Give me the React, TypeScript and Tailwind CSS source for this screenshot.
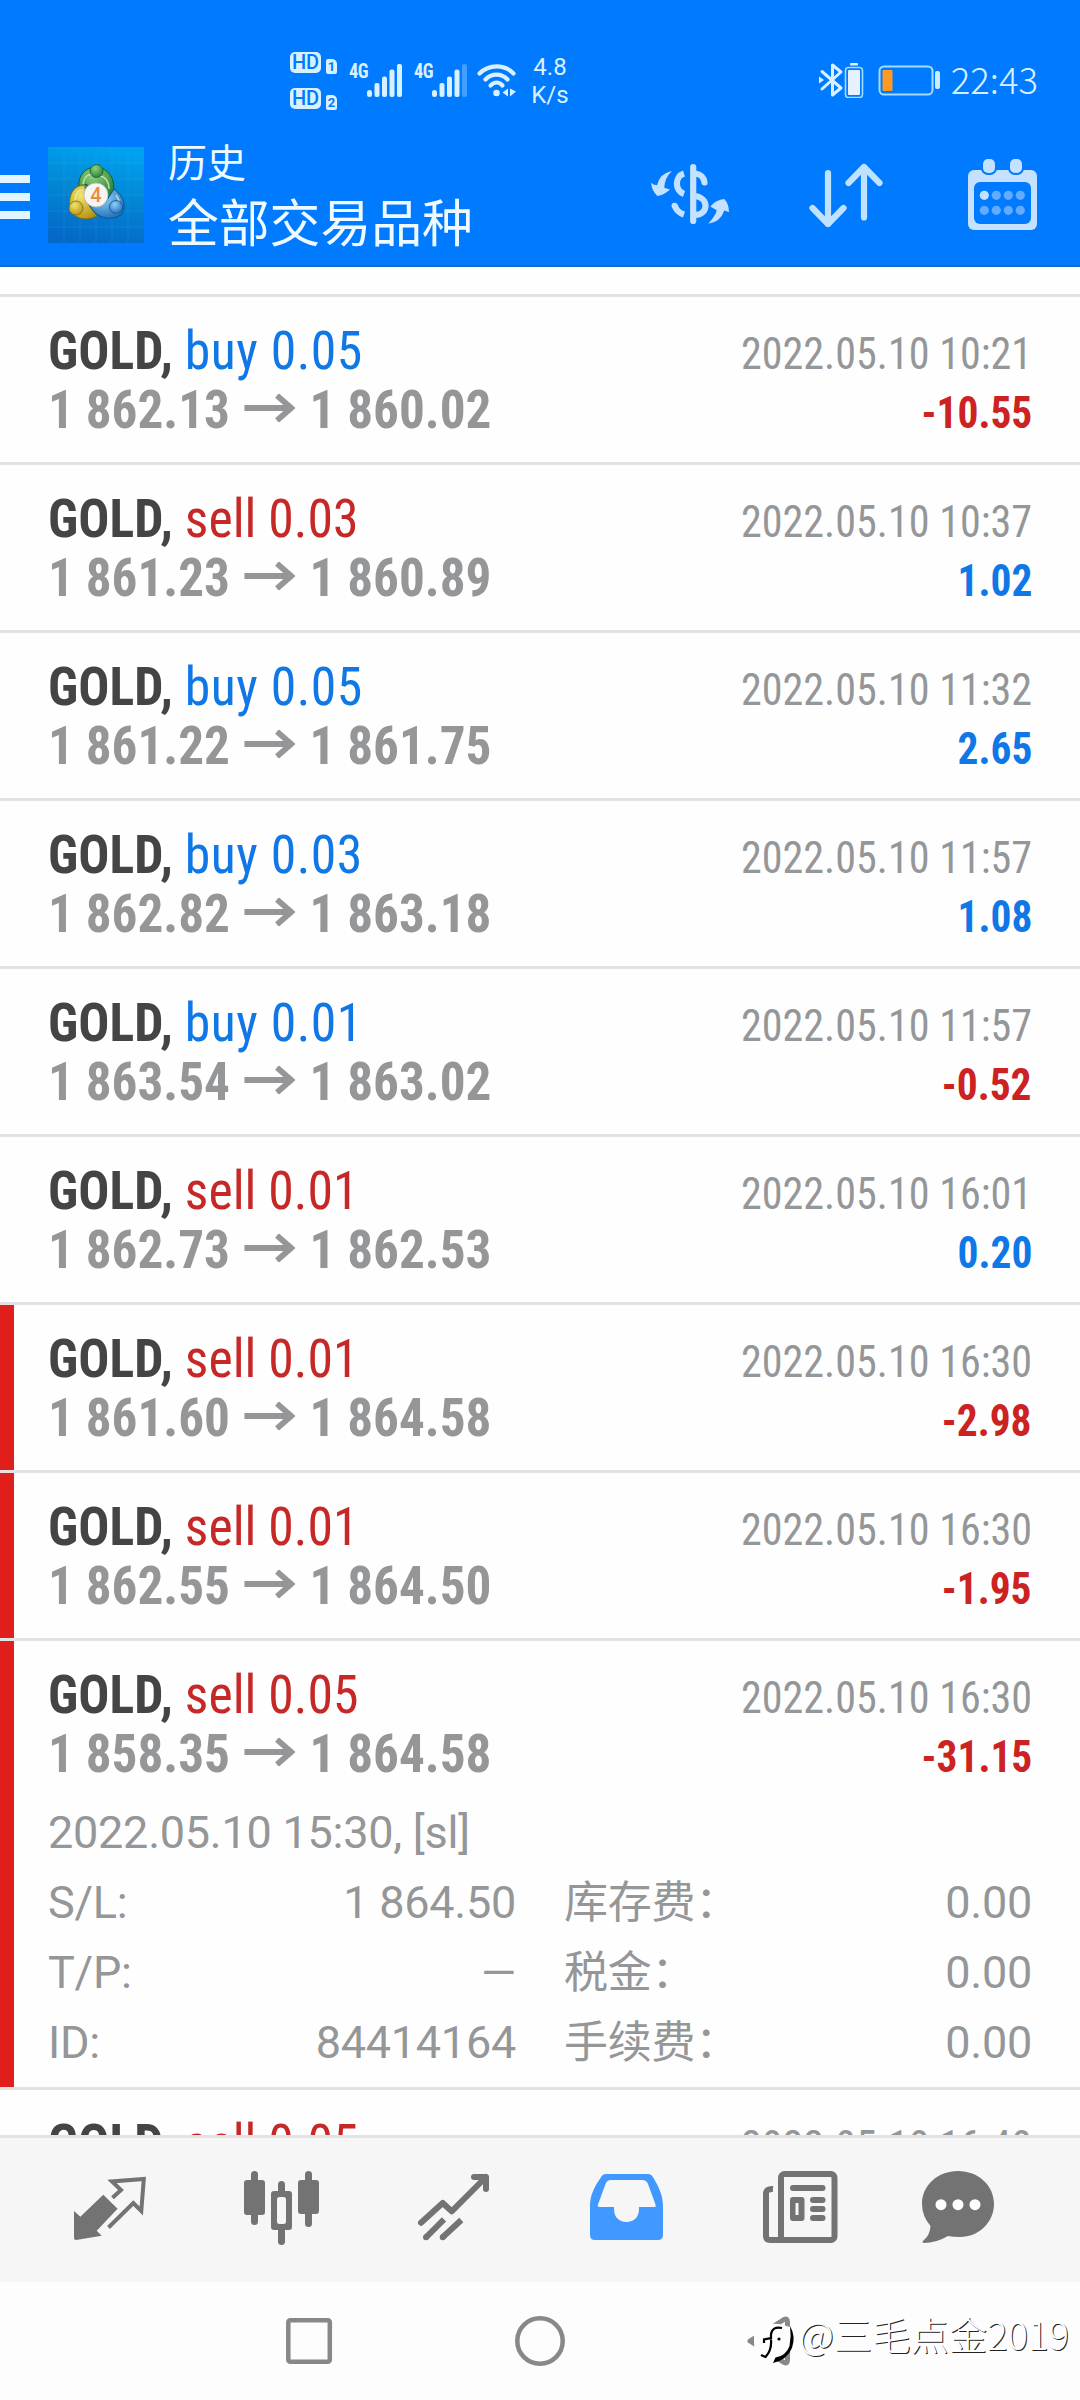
import { useState } from "react"
import clsx from "clsx"

const deals = [
  { id: 1, side: "buy", lots: "0.05", open: "1 862.13", close: "1 860.02", time: "2022.05.10 10:21", profit: "-10.55" },
  { id: 2, side: "sell", lots: "0.03", open: "1 861.23", close: "1 860.89", time: "2022.05.10 10:37", profit: "1.02" },
  { id: 3, side: "buy", lots: "0.05", open: "1 861.22", close: "1 861.75", time: "2022.05.10 11:32", profit: "2.65" },
  { id: 4, side: "buy", lots: "0.03", open: "1 862.82", close: "1 863.18", time: "2022.05.10 11:57", profit: "1.08" },
  { id: 5, side: "buy", lots: "0.01", open: "1 863.54", close: "1 863.02", time: "2022.05.10 11:57", profit: "-0.52" },
  { id: 6, side: "sell", lots: "0.01", open: "1 862.73", close: "1 862.53", time: "2022.05.10 16:01", profit: "0.20" },
  { id: 7, side: "sell", lots: "0.01", open: "1 861.60", close: "1 864.58", time: "2022.05.10 16:30", profit: "-2.98", stopped: true },
  { id: 8, side: "sell", lots: "0.01", open: "1 862.55", close: "1 864.50", time: "2022.05.10 16:30", profit: "-1.95", stopped: true },
  {
    id: 9,
    side: "sell",
    lots: "0.05",
    open: "1 858.35",
    close: "1 864.58",
    time: "2022.05.10 16:30",
    profit: "-31.15",
    stopped: true,
    details: {
      opened: "2022.05.10 15:30, [sl]",
      rows: [
        ["S/L:", "1 864.50", "库存费：", "0.00"],
        ["T/P:", "—", "税金：", "0.00"],
        ["ID:", "84414164", "手续费：", "0.00"],
      ],
    },
  },
  { id: 10, side: "sell", lots: "0.05", open: "1 858.35", close: "1 864.58", time: "2022.05.10 16:40", profit: "-31.15" },
]

function SimBadge({ slot }) {
  return (
    <div className="flex items-end gap-[5px]">
      <div className="flex h-[21px] w-[31px] items-center justify-center rounded-[5px] bg-[#d9f1ff] text-[20px] leading-none font-medium text-[#007aff]">
        HD
      </div>
      <div className="-mb-px flex h-[15px] w-[11px] items-center justify-center rounded-[2px] rounded-tr-[5px] bg-[#d9f1ff] text-[13px] leading-none font-bold text-[#007aff]">
        {slot}
      </div>
    </div>
  )
}

function Signal({ weak = false }) {
  return (
    <div className="flex h-[34px] w-[65px] items-start">
      <span className="w-[18px] origin-left scale-x-[0.92] font-[Roboto] text-[20px] leading-[17px] font-bold tracking-[-0.5px] text-[#d9f1ff] font-stretch-condensed">
        4G
      </span>
      <svg width="35" height="34" viewBox="0 0 35 34" fill="#d9f1ff">
        <rect x="0" y="27" width="5" height="7" rx="2.5" />
        <rect x="7.5" y="20" width="5" height="14" rx="2" />
        <rect x="15" y="13.5" width="5" height="20.5" rx="2" />
        <rect x="22.5" y="6.5" width="5" height="27.5" rx="2" />
        <rect x="30" y="1" width="5" height="33" rx="2" opacity={weak ? 0.3 : 1} />
      </svg>
    </div>
  )
}

function StatusBar() {
  return (
    <div className="flex h-32 items-center pt-8 pl-[290px] pr-[42px]">
      <div className="flex w-[59px] flex-col gap-[15px]">
        <SimBadge slot="1" />
        <SimBadge slot="2" />
      </div>
      <Signal />
      <Signal weak />
      <svg width="40" height="34" viewBox="0 0 40 34" className="-ml-0.5">
        <g fill="none" stroke="#d9f1ff" strokeWidth="4.2" strokeLinecap="round">
          <path d="M2.5 10.5C12 1 27.500 1 36.500 10.500" />
          <path d="M8.500 16.500C14.500 10 24.500 10 30.500 16.500" />
          <path d="M13.500 22.500C17.500 18.500 22 18.500 25.500 22.500" />
        </g>
        <circle cx="19.500" cy="30" r="3.300" fill="#d9f1ff" />
        <path d="M31 25.500V33.500L25.500 29.500ZM33 25.500V33.500L39 28.500Z" fill="#d9f1ff" />
      </svg>
      <div className="mt-0.5 ml-[13px] w-10 text-center font-[Roboto] text-[24px] leading-[28px] text-[#d9f1ff]">
        <div>4.8</div>
        <div>K/s</div>
      </div>
      <div className="ml-auto flex items-center">
        <svg width="122" height="36" viewBox="0 0 122 36">
          <path d="M3 9.500L22 26L13.500 33V3L22 10L3 27" fill="none" stroke="#d9f1ff" strokeWidth="3" strokeLinejoin="round" strokeLinecap="round" />
          <path d="M0 14.500L5 18L0 21.500Z" fill="#d9f1ff" />
          <rect x="31" y="1" width="8" height="2.500" rx="1" fill="#d9f1ff" />
          <rect x="26.500" y="5.500" width="17" height="30" rx="3" fill="none" stroke="#a5dcff" strokeWidth="1.600" />
          <rect x="29" y="8" width="12" height="25" rx="1" fill="#e6f0ff" />
          <rect x="60.500" y="4.500" width="53" height="28" rx="4.500" fill="none" stroke="#a5dcff" strokeWidth="2" />
          <rect x="63.500" y="8" width="10" height="21" rx="1" fill="#ff9a23" />
          <rect x="116" y="9" width="5" height="18" rx="2" fill="#c9ecff" />
        </svg>
        <span className="-mt-0.5 ml-[10px] font-['Noto_Sans_CJK_SC',sans-serif] text-[36.5px] leading-10 font-light text-[#d9f1ff]">22:43</span>
      </div>
    </div>
  )
}

function AppLogo() {
  return (
    <svg width="96" height="96" viewBox="0 0 96 96">
      <defs>
        <linearGradient id="logoBg" x1="0.6" y1="0" x2="0.4" y2="1">
          <stop offset="0" stopColor="#00a2f0" />
          <stop offset="0.5" stopColor="#0285d2" />
          <stop offset="1" stopColor="#0468c8" />
        </linearGradient>
        <radialGradient id="green" cx="0.4" cy="0.3" r="0.8">
          <stop offset="0" stopColor="#8fd07c" />
          <stop offset="1" stopColor="#1f7a34" />
        </radialGradient>
        <radialGradient id="yellow" cx="0.4" cy="0.3" r="0.8">
          <stop offset="0" stopColor="#f4e36a" />
          <stop offset="1" stopColor="#b08f10" />
        </radialGradient>
        <radialGradient id="blue" cx="0.4" cy="0.3" r="0.8">
          <stop offset="0" stopColor="#8ed0f8" />
          <stop offset="1" stopColor="#1769b5" />
        </radialGradient>
      </defs>
      <rect width="96" height="96" fill="url(#logoBg)" />
      <path
        d="M0 16H96M0 32H96M0 48H96M0 64H96M0 80H96M16 0V96M32 0V96M48 0V96M64 0V96M80 0V96"
        stroke="#5cc0f5"
        strokeWidth="0.600"
        opacity="0.250"
      />
      <path d="M31 42C29 24 42 20 48 20C56 20 69 28 65 47L55 51L38 37Z" fill="url(#green)" stroke="#175c2b" strokeWidth="1" />
      <path d="M37 38C24 38 20 50 22 62C26 73 40 74 49 69L38 54Z" fill="url(#yellow)" stroke="#7c6a12" strokeWidth="1" />
      <path d="M66 42C76 49 78 59 74 67C66 74 49 73 42 59L57 56Z" fill="url(#blue)" stroke="#134f8f" strokeWidth="1" />
      <path d="M35 37C37 26 44 26 49 30C56 27 61 34 61 42M35 43C27 43 26 53 28 60M68 48C74 55 71 62 68 67" fill="none" stroke="#d6f0bd" strokeWidth="1.500" opacity="0.800" />
      <circle cx="48.500" cy="24" r="6.500" fill="url(#green)" stroke="#175c2b" strokeWidth="0.800" />
      <circle cx="28" cy="61" r="7" fill="url(#yellow)" stroke="#7c6a12" strokeWidth="0.800" />
      <circle cx="68" cy="60" r="6.500" fill="url(#blue)" stroke="#134f8f" strokeWidth="0.800" />
      <circle cx="48" cy="48" r="12" fill="#f5f5f5" stroke="#b9bcae" strokeWidth="0.800" />
      <text x="48" y="55" textAnchor="middle" fontFamily="Roboto" fontSize="20" fontWeight="500" fill="#f08a3a">
        4
      </text>
    </svg>
  )
}

function AppBar() {
  return (
    <div className="flex h-[139px] items-center border-b-2 border-[#1268c4] pr-9">
      <div className="flex w-[30px] flex-col gap-[10px]">
        <span className="h-2 bg-[#e2f4ff]"></span>
        <span className="h-2 bg-[#e2f4ff]"></span>
        <span className="h-2 bg-[#e2f4ff]"></span>
      </div>
      <div className="mx-[18px] mb-1">
        <AppLogo />
      </div>
      <div className="mb-2 ml-1.5 font-['Noto_Sans_CJK_SC',sans-serif] text-[#eefaff]">
        <div className="text-[39px] leading-[56px]">历史</div>
        <div className="text-[50.8px] leading-[65px]">全部交易品种</div>
      </div>
      <div className="mb-1 ml-auto flex gap-[72px]">
        <svg width="84" height="84" viewBox="0 0 84 84" fill="#c4e2ff">
          <path
            d="M45.200 14V68M47 20.500C53 21 56 25 56.500 29.500M47 43C61 45 61 61 47 62"
            fill="none"
            stroke="#c4e2ff"
            strokeWidth="6.200"
            strokeLinecap="round"
          />
          <path d="M36 20.500C26.500 23.500 26.500 37.500 36 41M36 61.500C31.500 60 28 57 26.800 52.500" fill="none" stroke="#c4e2ff" strokeWidth="6.200" />
          <circle cx="26.600" cy="52.800" r="3.100" />
          <path d="M24 18Q16.500 25 16.300 34.700L22 36.500Q16 42 9.300 43Q4 38 3 29.700Q5 32 9 32.300Q12 20 24 18Z" />
          <path d="M60.300 70.700Q68 62 68.700 57.300L62.300 53.500Q68 46.500 76.300 46Q81 51 81 59.300Q79 58 76.300 57.500Q72.500 69 60.300 70.700Z" />
        </svg>
        <svg width="84" height="84" viewBox="0 0 84 84" fill="none" stroke="#bfe3ff" strokeWidth="6.200" strokeLinecap="round" strokeLinejoin="round">
          <path d="M24 20V71M8.500 55L24 71L39.500 55" />
          <path d="M60 64.500V14M44.500 30L60 14L75.500 30" />
        </svg>
        <svg width="84" height="84" viewBox="0 0 84 84">
          <rect x="8" y="17" width="69" height="60" rx="6" fill="#c4e2ff" />
          <rect x="14" y="29" width="57" height="42" rx="6" fill="#007aff" />
          <rect x="21" y="4" width="16" height="18" rx="7" fill="#007aff" />
          <rect x="48" y="4" width="16" height="18" rx="7" fill="#007aff" />
          <rect x="23" y="6" width="12" height="14" rx="5" fill="#c4e2ff" />
          <rect x="50" y="6" width="12" height="14" rx="5" fill="#c4e2ff" />
          <g fill="#62acff">
            <circle cx="24.300" cy="42.300" r="4.600" fill="#c4e2ff" />
            <circle cx="36.300" cy="42.300" r="4.600" />
            <circle cx="48.300" cy="42.300" r="4.600" />
            <circle cx="60.300" cy="42.300" r="4.600" />
            <circle cx="24.300" cy="57.300" r="4.600" />
            <circle cx="36.300" cy="57.300" r="4.600" />
            <circle cx="48.300" cy="57.300" r="4.600" />
            <circle cx="60.300" cy="57.300" r="4.600" />
          </g>
        </svg>
      </div>
    </div>
  )
}

function DealRow({ deal }) {
  const loss = deal.profit.startsWith("-")

  return (
    <div className="flex border-t-[3px] border-[#e3e3e3]">
      <div className={clsx("w-[14px] shrink-0", deal.stopped && "bg-[#e01e1c]")}></div>
      <div className="flex-1 pt-6 pr-12 pl-[34px]">
        <div className="h-[141px] font-['Roboto_Condensed','Roboto'] text-[54px] leading-[59px] whitespace-nowrap font-stretch-condensed">
          <div className="flex h-[59px] items-baseline justify-between">
            <div className="origin-left scale-x-[0.957]">
              <span className="font-bold text-[#444444]">GOLD, </span>
              <span className={deal.side === "buy" ? "tracking-[0.5px] text-[#0f78e6]" : "text-[#c62828]"}>
                {deal.side} {deal.lots}
              </span>
            </div>
            <div className="origin-right scale-x-[0.936] text-[45px] text-[#949698]">{deal.time}</div>
          </div>
          <div className="flex h-[59px] items-baseline justify-between">
            <div className="flex origin-left scale-x-[0.948] items-baseline font-bold text-[#949698]">
              <span>{deal.open}</span>
              <svg width="54" height="28" viewBox="0 0 54 28" className="mr-[15px] ml-[15px] translate-y-[-6px]" fill="none" stroke="#949698" strokeWidth="6">
                <path d="M0 14H51" />
                <path d="M34.500 1.500L49.500 14L34.500 26.500" />
              </svg>
              <span>{deal.close}</span>
            </div>
            <div className={clsx("origin-right scale-x-[0.92] text-[45px] font-bold", loss ? "text-[#cc2222]" : "text-[#0f78e6]")}>
              {deal.profit}
            </div>
          </div>
        </div>

        {deal.details && (
          <div className="-mt-[8px] pb-[9px] font-['Roboto','Noto_Sans_CJK_SC',sans-serif] text-[45px] leading-[70px] tracking-[-0.25px] text-[#949698]">
            <div>{deal.details.opened}</div>
            {deal.details.rows.map(([label, value, feeLabel, fee]) => (
              <div key={label} className="flex h-[70px]">
                <div className="flex w-[468px] justify-between">
                  <span>{label}</span>
                  <span>{value}</span>
                </div>
                <div className="ml-12 flex flex-1 justify-between">
                  <span className="text-[44px]">{feeLabel}</span>
                  <span>{fee}</span>
                </div>
              </div>
            ))}
          </div>
        )}
      </div>
    </div>
  )
}

const tabs = [
  {
    name: "quotes",
    icon: (
      <>
        <path d="M12 49L18.300 54.700L41.300 32.700L55.600 46.700L34.700 68.700L39.700 73.700L14 78Q12 78 12 76Z" />
        <path d="M50.500 35.700L59 28L50 19.500L81.800 17L79.300 49L71.300 41L46.500 65.500" fill="none" stroke="currentColor" strokeWidth="4" />
      </>
    ),
  },
  {
    name: "charts",
    icon: (
      <>
        <rect x="10" y="18" width="21" height="35" rx="3" />
        <rect x="17" y="9" width="7" height="54" rx="3.500" />
        <rect x="64" y="18" width="21" height="34" rx="3" />
        <rect x="71" y="9" width="7" height="56" rx="3.500" />
        <rect x="44" y="19" width="7" height="64" rx="3.500" />
        <rect x="37" y="29" width="21" height="39" rx="3" />
        <rect x="43" y="35" width="9" height="27" rx="2.500" fill="#f6f6f6" />
      </>
    ),
  },
  {
    name: "trade",
    icon: (
      <g fill="none" stroke="currentColor" strokeWidth="6" strokeLinejoin="round">
        <path d="M15 60.700L36.700 41L45.700 49.300L80 15M68 15H80V27" strokeLinecap="round" />
        <path d="M20 75.300L38 57.300M36.700 75.300L55.300 58" />
        <circle cx="20" cy="75.300" r="1.500" strokeWidth="3" />
        <circle cx="36.700" cy="75.300" r="1.500" strokeWidth="3" />
      </g>
    ),
  },
  {
    name: "history",
    icon: (
      <>
        <path d="M28 12H70Q73.500 12 75.500 16C81 25 85 34 85 44V73Q85 78 80 78H17Q12 78 12 73V44C12 34 16 25 22.500 16Q24.500 12 28 12Z" />
        <path
          d="M33 18H64Q68.500 18 70 22L77.500 42.500Q78.500 45 76 45H61V47C61 55 56 60 48.500 60C41 60 36 55 36 47V45H22Q19 45 20 42.500L27.500 22Q29 18 33 18Z"
          fill="#f6f6f6"
        />
      </>
    ),
  },
  {
    name: "news",
    icon: (
      <>
        <g fill="none" stroke="currentColor" strokeWidth="6">
          <rect x="31" y="12" width="53.500" height="66" rx="3.500" />
          <path d="M23 27Q16 26.500 16 32V74Q16 78 20 78H34" />
        </g>
        <rect x="40" y="23" width="35.500" height="6" rx="3" />
        <rect x="60" y="35" width="15.500" height="6" rx="3" />
        <rect x="60" y="44" width="15.500" height="6" rx="3" />
        <rect x="60" y="53" width="15.500" height="6" rx="3" />
        <rect x="40" y="35" width="14.500" height="24" rx="3" />
        <rect x="45.500" y="41" width="3" height="12" fill="#f6f6f6" />
      </>
    ),
  },
  {
    name: "messages",
    icon: (
      <>
        <path d="M36 9C56 9 72 23 72 42C72 60 57 75 38 75Q31 75 26 74Q14 81 2 81Q-1 80 2 78Q8 73 8.500 64Q0 54 0 42C0 23 16 9 36 9Z" />
        <circle cx="19" cy="42.700" r="5.500" fill="#fff" />
        <circle cx="36" cy="42.700" r="5.500" fill="#fff" />
        <circle cx="53" cy="42.700" r="5.500" fill="#fff" />
      </>
    ),
  },
]

export default function App() {
  const [activeTab, setActiveTab] = useState("history")

  return (
    <div className="flex h-[2400px] w-[1080px] flex-col overflow-hidden bg-white font-[Roboto]">
      <header className="bg-[#007aff]">
        <StatusBar />
        <AppBar />
      </header>

      <main className="h-[1868px] overflow-hidden bg-[#fefefe] pt-[27px]">
        {deals.map((deal) => (
          <DealRow key={deal.id} deal={deal} />
        ))}
      </main>

      <nav className="flex h-[147px] gap-[76px] border-t-[3px] border-[#e3e3e3] bg-[#f6f6f6] pt-6 pl-[62px]">
        {tabs.map((tab) => (
          <button
            key={tab.name}
            aria-label={tab.name}
            onClick={() => setActiveTab(tab.name)}
            className={clsx("h-24 w-24", activeTab === tab.name ? "text-[#4199ff]" : "text-[#737373]")}
          >
            <svg width="96" height="96" viewBox="0 0 96 96" fill="currentColor">
              {tab.icon}
            </svg>
          </button>
        ))}
      </nav>

      {/* system buttons */}
      <div className="relative flex h-[118px] items-center bg-[#fdfdfd] pl-[284px]">
        <div className="flex w-[462px] items-center gap-[181px]">
          <svg width="50" height="50" viewBox="0 0 50 50" fill="none" stroke="#888888" strokeWidth="4.500">
            <rect x="4.300" y="4.300" width="41.500" height="41.500" rx="2" />
          </svg>
          <svg width="50" height="50" viewBox="0 0 50 50" fill="none" stroke="#888888" strokeWidth="4.500">
            <circle cx="25" cy="25" r="22.700" />
          </svg>
        </div>
        <svg width="50" height="50" viewBox="0 0 50 50">
          <path d="M4 25L38 3.500Q41.500 2 41.500 6V44Q41.500 48 38 46.500Z" fill="none" stroke="#888888" strokeWidth="5" strokeLinejoin="round" />
        </svg>

        {/* watermark */}
        <div className="absolute top-[30px] left-[746px] flex items-start">
          <svg width="53" height="54" viewBox="0 0 53 54">
            <path d="M8 22Q14 10 33 12L44 15Q49 24 45 36Q40 45 27 48L14 47Q8 42 8 30Z" fill="#fdfdfd" />
            <path d="M44 14Q50 24 46 36Q41 48 27 51L29.500 45.500Q40 44 43.500 34Q45.500 24 44 14Z" fill="#000" />
            <path d="M36 16Q26 14 25 22.500V26L18 27.500V31M25 27.500Q26 38 19.500 45L15 43" fill="none" stroke="#000" strokeWidth="2.200" />
            <circle cx="33" cy="27" r="1.600" fill="#000" />
          </svg>
          <span className="-mt-[3px] font-['Noto_Sans_CJK_SC',sans-serif] text-[38.3px] leading-[50px] font-light whitespace-nowrap text-white [text-shadow:1px_1px_0_#222]">
            @三毛点金2019
          </span>
        </div>
      </div>
    </div>
  )
}
